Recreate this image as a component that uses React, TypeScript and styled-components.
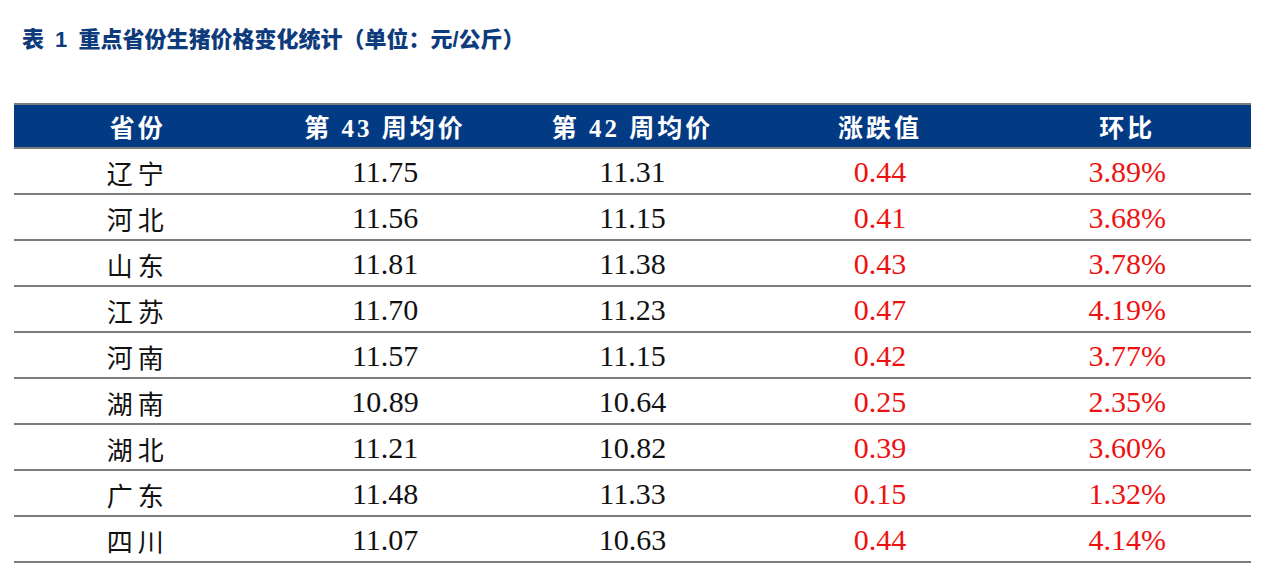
import styled, { createGlobalStyle } from "styled-components";

const GlobalStyle = createGlobalStyle`
  html, body {
    margin: 0;
    padding: 0;
    background: #ffffff;
  }
`;

const Page = styled.div`
  width: 1263px;
  height: 573px;
  padding: 22px 12px 0 14px;
  box-sizing: border-box;
  font-family: "Liberation Serif", "Noto Sans CJK SC", serif;
`;

const Title = styled.h1`
  margin: 0 0 0 8px;
  height: 36px;
  line-height: 36px;
  font-family: "Liberation Sans", "Noto Sans CJK SC", sans-serif;
  font-size: 22px;
  font-weight: 900;
  word-spacing: 5px;
  color: #0e3b7c;
`;

const Table = styled.div`
  margin-top: 45px;
  width: 1237px;
  display: grid;
  grid-template-columns: repeat(5, 1fr);
`;

const Row = styled.div`
  display: contents;
`;

const HeadCell = styled.div`
  height: 42px;
  background: #033a84;
  border-top: 2px solid #7c7c80;
  border-bottom: 2px solid #7c7c80;
  display: flex;
  align-items: center;
  justify-content: center;
  color: #ffffff;
  font-family: "Liberation Serif", "Noto Sans CJK SC", serif;
  font-weight: 700;
  font-size: 25px;
  letter-spacing: 3px;
`;

const Cell = styled.div<{ $red?: boolean; $cjk?: boolean }>`
  height: 42px;
  border-bottom: 2px solid #7c7c7c;
  display: flex;
  align-items: center;
  justify-content: center;
  color: ${(p) => (p.$red ? "#ee1111" : "#111111")};
  font-family: ${(p) =>
    p.$cjk
      ? `"Noto Sans CJK SC", sans-serif`
      : `"Liberation Serif", "Noto Sans CJK SC", serif`};
  font-size: ${(p) => (p.$cjk ? "26px" : "30px")};
  letter-spacing: ${(p) => (p.$cjk ? "5px" : "0")};
  padding-top: 2px;
  box-sizing: content-box;
`;

const rows: [string, string, string, string, string][] = [
  ["辽宁", "11.75", "11.31", "0.44", "3.89%"],
  ["河北", "11.56", "11.15", "0.41", "3.68%"],
  ["山东", "11.81", "11.38", "0.43", "3.78%"],
  ["江苏", "11.70", "11.23", "0.47", "4.19%"],
  ["河南", "11.57", "11.15", "0.42", "3.77%"],
  ["湖南", "10.89", "10.64", "0.25", "2.35%"],
  ["湖北", "11.21", "10.82", "0.39", "3.60%"],
  ["广东", "11.48", "11.33", "0.15", "1.32%"],
  ["四川", "11.07", "10.63", "0.44", "4.14%"],
];

const headers = ["省份", "第 43 周均价", "第 42 周均价", "涨跌值", "环比"];

export default function App() {
  return (
    <Page>
      <GlobalStyle />
      <Title>表 1 重点省份生猪价格变化统计（单位：元/公斤）</Title>
      <Table>
        <Row>
          {headers.map((h) => (
            <HeadCell key={h}>{h}</HeadCell>
          ))}
        </Row>
        {rows.map((r) => (
          <Row key={r[0]}>
            <Cell $cjk>{r[0]}</Cell>
            <Cell>{r[1]}</Cell>
            <Cell>{r[2]}</Cell>
            <Cell $red>{r[3]}</Cell>
            <Cell $red>{r[4]}</Cell>
          </Row>
        ))}
      </Table>
    </Page>
  );
}
